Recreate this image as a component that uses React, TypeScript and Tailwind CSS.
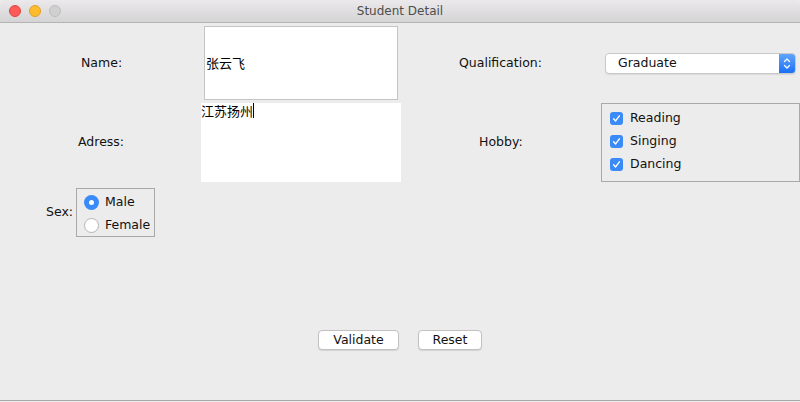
import React from 'react'

const FONT = { fontFamily: '"DejaVu Sans", "Noto Sans CJK SC", sans-serif' }
const CJK = { fontFamily: '"Noto Sans CJK SC", "DejaVu Sans", sans-serif' }

function Check(): React.JSX.Element {
  return (
    <span className="w-[13px] h-[13px] rounded-[3px] bg-[#3a8bf7] flex items-center justify-center">
      <svg width="9" height="9" viewBox="0 0 9 9">
        <path d="M1.6 4.8 L3.6 6.9 L7.4 1.8" fill="none" stroke="#fff" strokeWidth="1.4" strokeLinecap="round" strokeLinejoin="round" />
      </svg>
    </span>
  )
}

function Radio({ on }: { on: boolean }): React.JSX.Element {
  return on ? (
    <span className="w-[15px] h-[15px] rounded-full bg-[#3a8bf7] flex items-center justify-center">
      <span className="w-[5px] h-[5px] rounded-full bg-white" />
    </span>
  ) : (
    <span className="w-[15px] h-[15px] rounded-full bg-white border border-[#b5b5b5]" />
  )
}

export default function App(): React.JSX.Element {
  return (
    <div className="w-[800px] h-[402px] bg-[#ececec] flex flex-col text-[12.5px] text-[#111]" style={FONT}>
      <div className="h-[23px] flex items-center relative bg-gradient-to-b from-[#ebe9eb] to-[#d5d4d5] border-b border-[#b4b4b4] rounded-t-[5px]">
        <div className="flex gap-[8px] pl-[9px]">
          <span className="w-[12px] h-[12px] rounded-full bg-[#fc5b57] border border-[#e0443e]" />
          <span className="w-[12px] h-[12px] rounded-full bg-[#fdbc2e] border border-[#dea123]" />
          <span className="w-[12px] h-[12px] rounded-full bg-[#d0d0d0] border border-[#bdbdbd]" />
        </div>
        <div className="absolute inset-0 flex items-center justify-center text-[12px] text-[#4d4d4d]">Student Detail</div>
      </div>

      <div className="flex-1 flex flex-col border-b border-[#a9a9a9]">
        <div className="flex items-center mt-[3px] h-[74px]">
          <div className="w-[204px] pl-[81px]">Name:</div>
          <div className="w-[194px] h-[74px] bg-white border border-[#c4c4c4] flex items-center pl-[1px] text-[13px] text-black" style={CJK}>张云飞</div>
          <div className="w-[207px] pl-[61px]">Qualification:</div>
          <div className="w-[191px] h-[21px] bg-white rounded-[4px] border border-[#c8c8c8] shadow-[0_1px_1px_rgba(0,0,0,0.08)] flex items-center overflow-hidden">
            <span className="flex-1 pl-[12px]">Graduate</span>
            <span className="w-[16px] h-full bg-gradient-to-b from-[#5fa4fd] to-[#1b6ff5] flex items-center justify-center">
              <svg width="8" height="13" viewBox="0 0 8 13">
                <path d="M1.5 4.5 L4 2 L6.5 4.5 M1.5 8.5 L4 11 L6.5 8.5" fill="none" stroke="#fff" strokeWidth="1.3" strokeLinecap="round" strokeLinejoin="round" />
              </svg>
            </span>
          </div>
        </div>

        <div className="flex items-start mt-[3px] h-[79px]">
          <div className="w-[201px] pl-[78px] self-center">Adress:</div>
          <div className="w-[200px] h-[79px] bg-white text-[13px] leading-[16px] flex items-start text-black" style={CJK}>
            江苏扬州<span className="w-px h-[15px] bg-black" />
          </div>
          <div className="w-[200px] pl-[78px] self-center">Hobby:</div>
          <div className="w-[199px] h-[79px] border border-[#a9a9a9] flex flex-col gap-[9px] pl-[8px] pt-[7px]">
            <div className="flex items-center gap-[7px] h-[14px]"><Check />Reading</div>
            <div className="flex items-center gap-[7px] h-[14px]"><Check />Singing</div>
            <div className="flex items-center gap-[7px] h-[14px]"><Check />Dancing</div>
          </div>
        </div>

        <div className="flex items-center mt-[6px] h-[49px]">
          <div className="w-[76px] pl-[46px]">Sex:</div>
          <div className="w-[79px] h-[49px] border border-[#a9a9a9] flex flex-col gap-[8px] pl-[7px] pt-[6px]">
            <div className="flex items-center gap-[6px] h-[15px]"><Radio on />Male</div>
            <div className="flex items-center gap-[6px] h-[15px]"><Radio on={false} />Female</div>
          </div>
        </div>

        <div className="flex justify-center gap-[19px] mt-[93px]">
          <button className="w-[81px] h-[20px] bg-white rounded-[4px] border border-[#c1c1c1] shadow-[0_1px_1px_rgba(0,0,0,0.1)]">Validate</button>
          <button className="w-[64px] h-[20px] bg-white rounded-[4px] border border-[#c1c1c1] shadow-[0_1px_1px_rgba(0,0,0,0.1)]">Reset</button>
        </div>
      </div>
      <div className="h-[1px] bg-[#ececec]" />
    </div>
  )
}
